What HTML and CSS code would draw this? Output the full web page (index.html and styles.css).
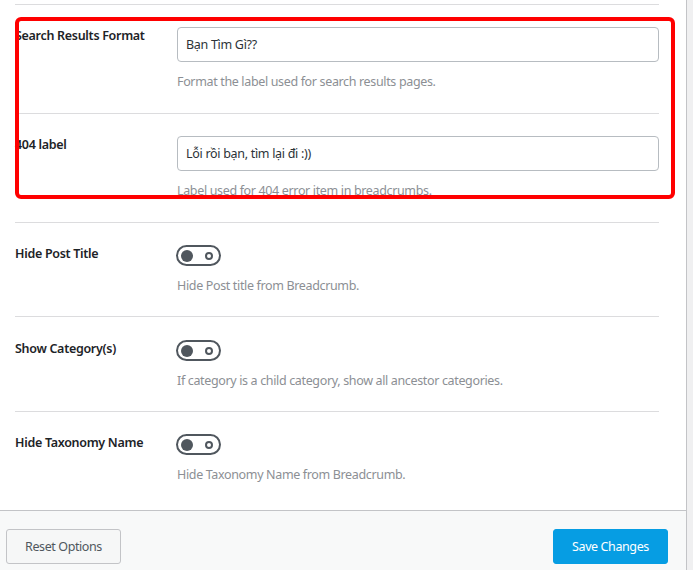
FILE: index.html
```html
<!DOCTYPE html>
<html lang="vi">
<head>
<meta charset="utf-8">
<title>Breadcrumb Settings</title>
<link rel="stylesheet" href="styles.css">
</head>
<body>
<div class="page">
  <div class="panel">
    <div class="row">
      <div class="label">Search Results Format</div>
      <div class="field">
        <input class="text-input" type="text" value="Bạn Tìm Gì??">
        <p class="desc">Format the label used for search results pages.</p>
      </div>
    </div>
    <div class="row">
      <div class="label">404 label</div>
      <div class="field">
        <input class="text-input" type="text" value="Lỗi rồi bạn, tìm lại đi :))">
        <p class="desc">Label used for 404 error item in breadcrumbs.</p>
      </div>
    </div>
    <div class="row row-toggle">
      <div class="label">Hide Post Title</div>
      <div class="field">
        <span class="toggle"><span class="knob"></span><span class="ring"></span></span>
        <p class="desc">Hide Post title from Breadcrumb.</p>
      </div>
    </div>
    <div class="row row-toggle row-tall">
      <div class="label">Show Category(s)</div>
      <div class="field">
        <span class="toggle"><span class="knob"></span><span class="ring"></span></span>
        <p class="desc">If category is a child category, show all ancestor categories.</p>
      </div>
    </div>
    <div class="row row-toggle">
      <div class="label">Hide Taxonomy Name</div>
      <div class="field">
        <span class="toggle"><span class="knob"></span><span class="ring"></span></span>
        <p class="desc">Hide Taxonomy Name from Breadcrumb.</p>
      </div>
    </div>
    <div class="highlight"></div>
  </div>
  <div class="footer">
    <button class="btn btn-reset" type="button">Reset Options</button>
    <button class="btn btn-save" type="button">Save Changes</button>
  </div>
</div>
</body>
</html>
```
FILE: styles.css
```css
* { box-sizing: border-box; }

html, body {
  margin: 0;
  padding: 0;
  background: #f0f0f1;
  font-family: "Noto Sans", "Open Sans", sans-serif;
  font-size: 12.5px;
  color: #1d2327;
}

.page {
  width: 687px;
  border-right: 1px solid #c3c4c7;
  background: #ffffff;
  min-height: 570px;
  display: flex;
  flex-direction: column;
}

.panel {
  position: relative;
  padding: 4px 27px 5px 15px;
  background: #ffffff;
}

.row {
  display: grid;
  grid-template-columns: 162px 1fr;
  border-top: 1px solid #dcdcde;
  padding: 22px 0 22px;
}

.row-toggle {
  padding-bottom: 21px;
}

.row-tall {
  padding-top: 23px;
}

.label {
  font-weight: 600;
  line-height: 18px;
  color: #1d2327;
  letter-spacing: -0.3px;
}

.field {
  display: flex;
  flex-direction: column;
  align-items: flex-start;
}

.text-input {
  width: 100%;
  height: 35px;
  border: 1px solid #b7bcc1;
  border-radius: 4px;
  padding: 0 8px;
  font-family: inherit;
  font-size: 12.5px;
  color: #2c3338;
  background: #ffffff;
  letter-spacing: -0.3px;
}

.desc {
  margin: 11px 0 0;
  line-height: 18px;
  color: #8c8f94;
  letter-spacing: -0.35px;
}

.toggle {
  width: 45px;
  height: 21px;
  margin-left: -1px;
  border: 2px solid #50575e;
  border-radius: 11px;
  display: flex;
  align-items: center;
  justify-content: space-between;
  padding: 0 6px 0 3px;
}

.knob {
  width: 12px;
  height: 12px;
  border-radius: 50%;
  background: #50575e;
}

.ring {
  width: 8px;
  height: 8px;
  border-radius: 50%;
  border: 2px solid #50575e;
}

.highlight {
  position: absolute;
  left: 15px;
  top: 17px;
  width: 660px;
  height: 182px;
  border: 4px solid #ff0000;
  border-radius: 6px;
  pointer-events: none;
}

.footer {
  flex: 1;
  border-top: 1px solid #c3c4c7;
  background: #f8f9f9;
  display: flex;
  justify-content: space-between;
  align-items: flex-start;
  padding: 18px 18px 0 6px;
}

.btn {
  width: 115px;
  height: 35px;
  padding: 0;
  border-radius: 3px;
  font-family: inherit;
  font-size: 12.5px;
  letter-spacing: -0.4px;
  white-space: nowrap;
  text-align: center;
  cursor: pointer;
}

.btn-reset {
  background: #f6f7f7;
  border: 1px solid #c3c4c7;
  color: #50575e;
}

.btn-save {
  background: #069de3;
  border: 1px solid #069de3;
  color: #ffffff;
}
```
